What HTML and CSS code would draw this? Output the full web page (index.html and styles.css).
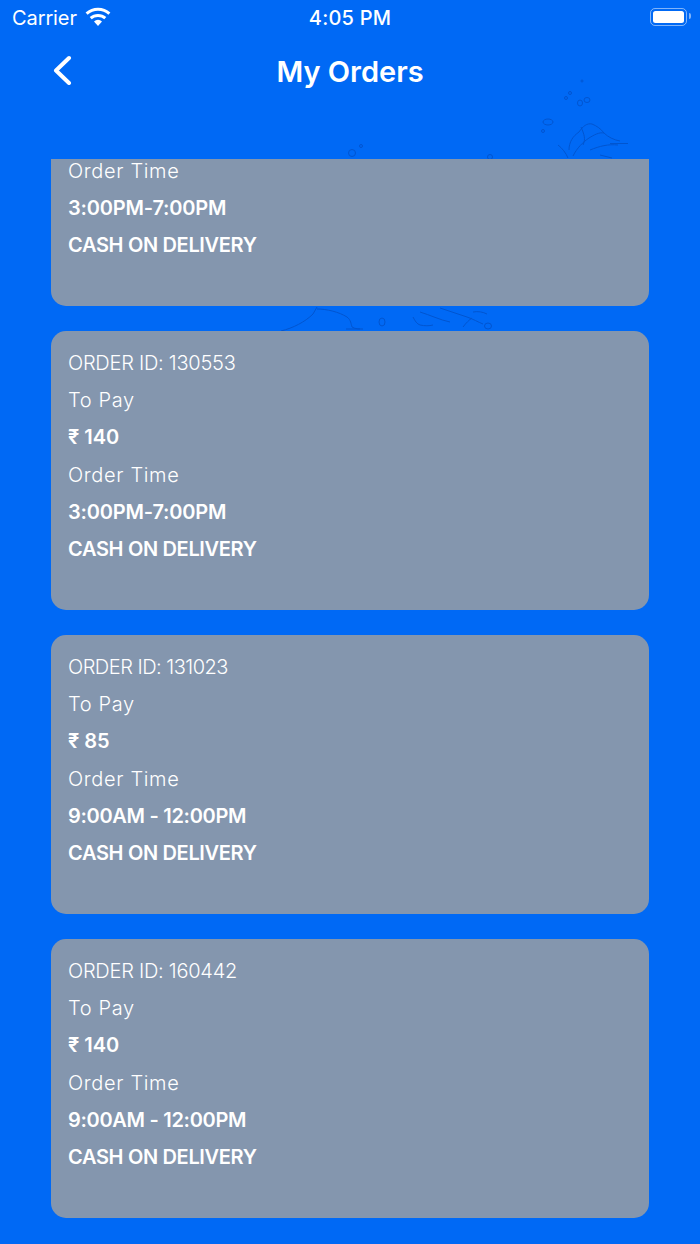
FILE: index.html
```html
<!DOCTYPE html>
<html lang="en">
<head>
<meta charset="utf-8">
<title>My Orders</title>
<link rel="stylesheet" href="styles.css">
</head>
<body>
<div class="screen">
  <svg class="splash splash-top" viewBox="340 75 300 84" aria-hidden="true">
    <g fill="none" stroke="#0055cf" stroke-width="1">
      <path d="M569 150c0-8 4-14 10-18 4-6 8-9 13-8 5 2 9 5 12 9 4 4 10 7 16 8M573 156c4-8 10-14 16-18 5-3 10-6 15-5M581 127c3 7 5 12 2 18M590 150c10-4 18-6 28-5M610 143.500h18"/>
      <path d="M558 145c4 3 8 8 10 13M600 155l12 3"/>
      <ellipse cx="548" cy="122" rx="5" ry="3"/><circle cx="543" cy="131" r="1.500"/>
      <ellipse cx="580" cy="103" rx="2.500" ry="3"/><ellipse cx="587" cy="100" rx="3" ry="2.500"/>
      <circle cx="570" cy="93" r="1.500"/><circle cx="566" cy="98" r="1.500"/><circle cx="582" cy="81" r="1"/>
      <circle cx="352" cy="153" r="3.500"/><circle cx="361" cy="146" r="1.500"/><circle cx="490" cy="157" r="2.500"/>
    </g>
  </svg>
  <svg class="splash splash-mid" viewBox="280 306 250 25" aria-hidden="true">
    <g fill="none" stroke="#0055cf" stroke-width="1">
      <path d="M281 331c12-3 24-9 32-17l4-7M317 309c10 0 22 3 30 8 4 3 4 7 5 10 3 2 7 2 11 2M346 329h14"/>
      <ellipse cx="382" cy="322" rx="3" ry="4"/>
      <path d="M413 317c2 4 4 7 7 8 5 1 9 1 13 0M420 312c10 3 20 8 30 10M440 308c9 3 18 6 27 9 6 2 11 5 16 7M463 327c3-4 6-7 9-9"/>
      <path d="M473 312c5-1 10 0 14 2"/><ellipse cx="488" cy="326" rx="3.500" ry="3"/>
    </g>
  </svg>
  <header class="status">
    <div class="status-left">
      <span class="carrier">Carrier</span>
      <svg class="wifi" viewBox="0 0 26 19" aria-hidden="true">
        <path d="M13 19l-4-4.600a6 6 0 0 1 8 0z" fill="#fff"/>
        <path d="M5.700 11.200a11 11 0 0 1 14.600 0" fill="none" stroke="#fff" stroke-width="3"/>
        <path d="M1.600 6.600a17 17 0 0 1 22.800 0" fill="none" stroke="#fff" stroke-width="3"/>
      </svg>
    </div>
    <span class="clock">4:05 PM</span>
    <div class="battery"><span class="battery-fill"></span></div>
  </header>
  <nav class="nav">
    <svg class="back" viewBox="0 0 20 30" aria-hidden="true">
      <path d="M17 3L4 15.500 17 28" fill="none" stroke="#fff" stroke-width="4" stroke-linecap="round" stroke-linejoin="round"/>
    </svg>
    <h1 class="title">My Orders</h1>
  </nav>
  <main class="list">
    <article class="card card-scrolled">
      <p class="line label">Order Time</p>
      <p class="line strong time">3:00PM-7:00PM</p>
      <p class="line strong pay">CASH ON DELIVERY</p>
    </article>
    <article class="card">
      <p class="line order-id">ORDER ID: 130553</p>
      <p class="line label">To Pay</p>
      <p class="line strong">₹ 140</p>
      <p class="line label">Order Time</p>
      <p class="line strong time">3:00PM-7:00PM</p>
      <p class="line strong pay">CASH ON DELIVERY</p>
    </article>
    <article class="card">
      <p class="line order-id order-id-narrow">ORDER ID: 131023</p>
      <p class="line label">To Pay</p>
      <p class="line strong">₹ 85</p>
      <p class="line label">Order Time</p>
      <p class="line strong time-range">9:00AM - 12:00PM</p>
      <p class="line strong pay">CASH ON DELIVERY</p>
    </article>
    <article class="card">
      <p class="line order-id">ORDER ID: 160442</p>
      <p class="line label">To Pay</p>
      <p class="line strong">₹ 140</p>
      <p class="line label">Order Time</p>
      <p class="line strong time-range">9:00AM - 12:00PM</p>
      <p class="line strong pay">CASH ON DELIVERY</p>
    </article>
  </main>
</div>
</body>
</html>
```
FILE: styles.css
```css
* { box-sizing: border-box; }
html, body { margin: 0; height: 100%; }
body { background: #0069f5; color: #fff; font-family: "Inter", "Liberation Sans", sans-serif; overflow: hidden; }
.screen { position: relative; display: flex; flex-direction: column; width: 700px; height: 1244px; background: #0069f5; overflow: hidden; }
.splash { position: absolute; pointer-events: none; filter: blur(.6px); }
.splash-top { left: 340px; top: 75px; width: 300px; height: 84px; }
.splash-mid { left: 280px; top: 306px; width: 250px; height: 25px; }
.status { display: flex; align-items: center; justify-content: space-between; height: 36px; padding: 0 13px 0 12px; position: relative; font-size: 20px; flex: none; }
.status-left { display: flex; align-items: center; gap: 8px; }
.carrier { font-weight: 400; letter-spacing: -.1px; }
.wifi { width: 26px; height: 19px; margin-top: -4px; }
.clock { position: absolute; left: 0; right: 0; text-align: center; font-weight: 500; letter-spacing: .2px; pointer-events: none; }
.battery { position: relative; display: flex; width: 37px; height: 18px; margin-top: -2px; padding: 2px; border: 1.5px solid rgba(255,255,255,.5); border-radius: 5px; }
.battery::after { content: ""; position: absolute; right: -5px; top: 4px; width: 2px; height: 6px; border-radius: 0 2px 2px 0; background: rgba(255,255,255,.5); }
.battery-fill { flex: 1; background: #fff; border-radius: 2.5px; }
.nav { position: relative; display: flex; align-items: center; justify-content: center; height: 70px; flex: none; }
.back { position: absolute; left: 52px; top: 19px; width: 20px; height: 30px; }
.title { margin: 0; font-size: 29px; font-weight: 600; line-height: 1; }
.list { flex: 1; min-height: 0; margin-top: 53px; display: flex; flex-direction: column; justify-content: flex-end; gap: 25px; padding: 0 51px 26px; overflow: hidden; }
.card { flex: none; height: 279px; padding: 14px 17px 0; border-radius: 15px; background: #8496ae; }
.card-scrolled { padding-top: 125.6px; }
.line { margin: 0; height: 37.2px; font-size: 20px; line-height: 37.2px; font-weight: 300; white-space: nowrap; }
.label { letter-spacing: .65px; }
.order-id { letter-spacing: -.25px; }
.order-id-narrow { letter-spacing: -.5px; }
.strong { font-weight: 600; }
.time { letter-spacing: -.17px; }
.time-range { letter-spacing: -.3px; }
.pay { letter-spacing: -.33px; }
```
